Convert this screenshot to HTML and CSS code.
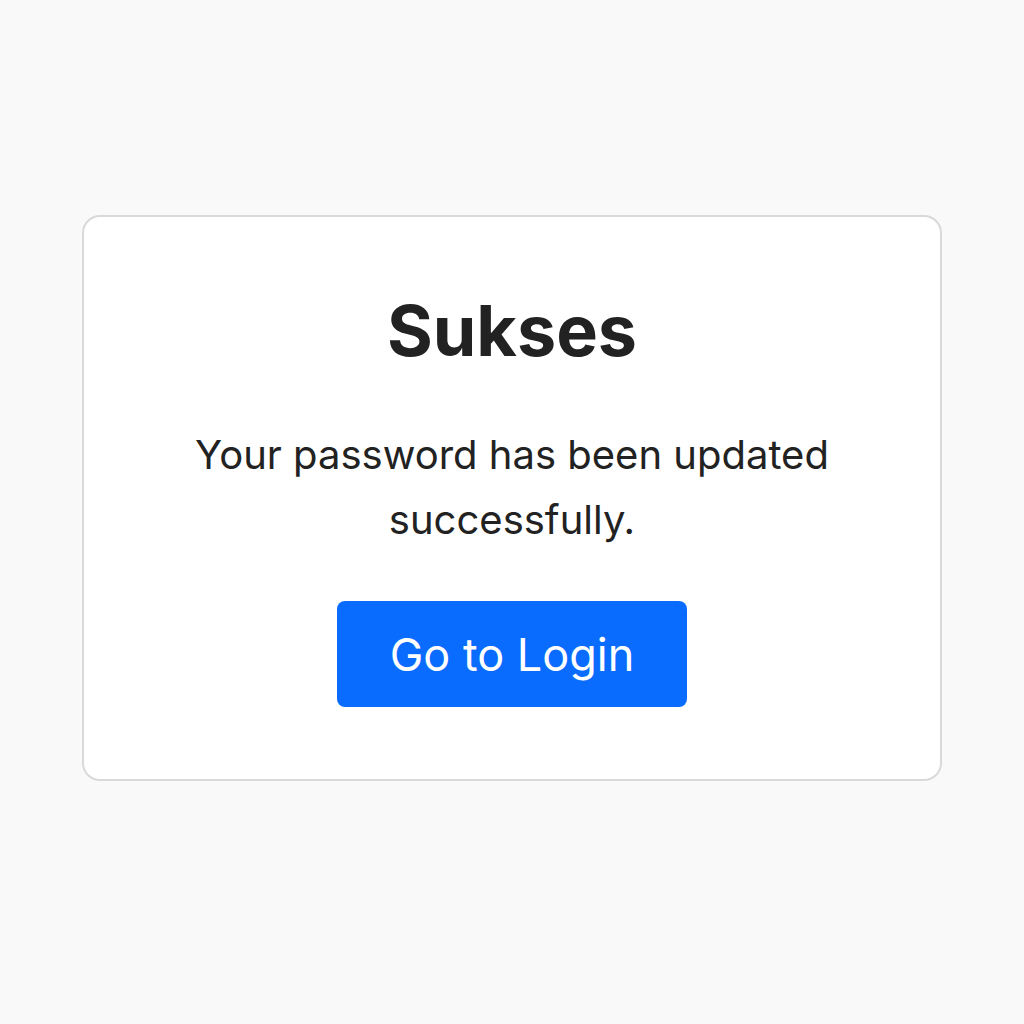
FILE: index.html
```html
<!DOCTYPE html>
<html lang="en">
<head>
<meta charset="utf-8">
<title>Sukses</title>
<link rel="stylesheet" href="styles.css">
</head>
<body>
<main class="page">
  <section class="card">
    <h1 class="card-title">Sukses</h1>
    <p class="card-text">Your password has been updated successfully.</p>
    <a class="btn-primary" href="#">Go to Login</a>
  </section>
</main>
</body>
</html>
```
FILE: styles.css
```css
html, body {
  margin: 0;
  padding: 0;
}
body {
  background: #f9f9f9;
  font-family: Inter, "Noto Sans", "Liberation Sans", sans-serif;
  color: #222222;
}
.page {
  min-height: 1024px;
  display: flex;
  align-items: flex-start;
  justify-content: center;
  padding-top: 215px;
  box-sizing: border-box;
}
.card {
  width: 860px;
  height: 566px;
  box-sizing: border-box;
  background: #ffffff;
  border: 2px solid #d9d9d9;
  border-radius: 18px;
  display: flex;
  flex-direction: column;
  align-items: center;
  padding-top: 79px;
}
.card-title {
  margin: 0;
  font-size: 70px;
  font-weight: 700;
  line-height: 1;
  color: #222222;
}
.card-text {
  margin: 56px 0 0;
  width: 680px;
  text-align: center;
  font-size: 40px;
  line-height: 65px;
  color: #222222;
}
.btn-primary {
  margin-top: 49px;
  width: 350px;
  height: 106px;
  display: flex;
  align-items: center;
  justify-content: center;
  background: #0a6cff;
  color: #ffffff;
  border-radius: 8px;
  font-size: 45px;
  text-decoration: none;
}
```
